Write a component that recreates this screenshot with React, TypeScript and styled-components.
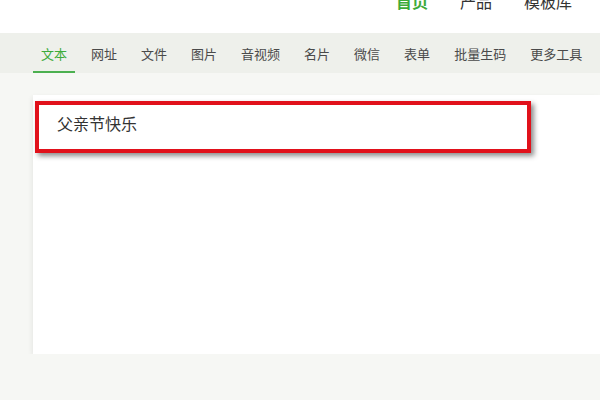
import React, { FC } from 'react';
import styled, { createGlobalStyle } from 'styled-components';

const GlobalStyle = createGlobalStyle`
    html, body {
        margin: 0;
        padding: 0;
        background: #f6f7f4;
        font-family: "Microsoft YaHei", "Noto Sans CJK SC", "Noto Sans", sans-serif;
        overflow: hidden;
    }
`;

const Header = styled.div`
    height: 33px;
    background: #fff;
    overflow: hidden;
`;

const Nav = styled.ul`
    display: flex;
    justify-content: flex-end;
    gap: 32px;
    margin: -7px 0 0;
    padding: 0 28px 0 0;
    list-style: none;
`;

const NavItem = styled.li<{ $active?: boolean }>`
    font-size: 16px;
    line-height: 16px;
    color: ${(p) => (p.$active ? '#3dab3a' : '#333')};
    font-weight: ${(p) => (p.$active ? 'bold' : 'normal')};
`;

const TabBar = styled.div`
    display: flex;
    align-items: stretch;
    gap: 8px;
    height: 40px;
    padding-left: 33px;
    background: #eef0eb;
`;

const Tab = styled.div<{ $active?: boolean }>`
    display: flex;
    align-items: center;
    padding: 2px 8px 0;
    font-size: 13px;
    color: ${(p) => (p.$active ? '#3dab3a' : '#4a4a4a')};
    border-bottom: 2px solid ${(p) => (p.$active ? '#4cb050' : 'transparent')};
    box-sizing: border-box;
`;

const Main = styled.div`
    padding: 22px 0 0 33px;
`;

const Card = styled.div`
    height: 259px;
    padding: 6px 0 0 2px;
    box-sizing: border-box;
    background: #fff;
    box-shadow: -1px 2px 5px rgba(0, 0, 0, 0.07);
`;

const Highlight = styled.div`
    width: 496px;
    height: 52px;
    box-sizing: border-box;
    border: 4px solid #e1111b;
    box-shadow: 3px 3px 5px rgba(0, 0, 0, 0.45);
    padding: 6px 0 0 18px;
    font-size: 16px;
    line-height: 24px;
    color: #333;
`;

const navItems = ['首页', '产品', '模板库'];
const tabs = ['文本', '网址', '文件', '图片', '音视频', '名片', '微信', '表单', '批量生码', '更多工具'];

const App: FC = () => (
    <>
        <GlobalStyle />
        <Header>
            <Nav>
                {navItems.map((item, i) => (
                    <NavItem key={item} $active={i === 0}>{item}</NavItem>
                ))}
            </Nav>
        </Header>
        <TabBar>
            {tabs.map((tab, i) => (
                <Tab key={tab} $active={i === 0}>{tab}</Tab>
            ))}
        </TabBar>
        <Main>
            <Card>
                <Highlight>父亲节快乐</Highlight>
            </Card>
        </Main>
    </>
);

export default App;
